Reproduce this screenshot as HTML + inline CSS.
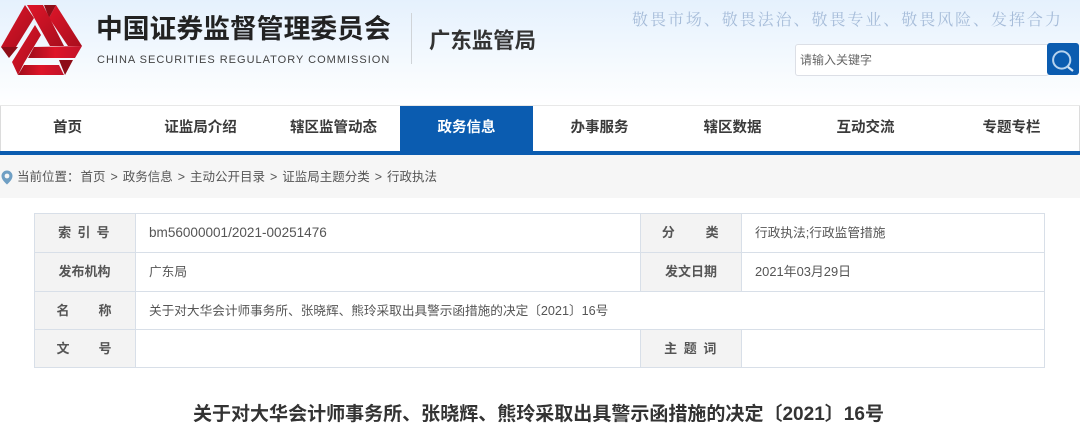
<!DOCTYPE html>
<html lang="zh"><head><meta charset="utf-8"><style>
*{margin:0;padding:0;box-sizing:border-box}
html,body{width:1080px;height:444px;overflow:hidden;background:#fff}
body{position:relative;font-family:"Liberation Sans","Noto Sans CJK SC",sans-serif;color:#444}
.a{position:absolute;white-space:nowrap}
#hd{left:0;top:0;width:1080px;height:106px;background:linear-gradient(#e5f1fd,#fff)}
.nv{top:106px;height:45px;line-height:45px;text-align:center;font-size:14.5px;font-weight:700;color:#3a3a3a}
.ln{background:#d8dfe8}
.th{background:#f3f3f3;text-align:center;font-size:13px;font-weight:700;color:#555;height:38px;line-height:38px}
.td{font-size:13px;color:#555;height:38px;line-height:38px}
</style></head><body>
<div class="a" id="hd"></div>
<svg class="a" style="left:0;top:0;filter:blur(.35px)" width="90" height="80" viewBox="0 0 90 80">
<defs>
<linearGradient id="g" x1="0" y1="0" x2="1" y2="1"><stop offset="0" stop-color="#de1529"/><stop offset="1" stop-color="#a80e1d"/></linearGradient>
<linearGradient id="h" x1="0" y1="0" x2="1" y2="0"><stop offset="0" stop-color="#a00d1b"/><stop offset=".5" stop-color="#de1529"/><stop offset="1" stop-color="#c2132a"/></linearGradient>
</defs>
<polygon points="56,5 82,46 68,46 49,18" fill="url(#g)"/>
<polygon points="44,5 56,5 49,18" fill="#8e0d18"/>
<polygon points="1,47 18,47 9,58" fill="#8e0d18"/>
<polygon points="59,60 73,60 65,75" fill="#8e0d18"/>
<polygon points="25,5 34,18 16,47 1,47" fill="url(#g)"/>
<polygon points="27,5 43,5 64,46 50,46" fill="url(#g)"/>
<polygon points="34,47 82,46 75,58 28,58" fill="url(#h)"/>
<polygon points="35,25 41,35 24,63 18,75 12,62" fill="url(#g)"/>
<polygon points="18,75 24,65 59,65 64,75" fill="url(#h)"/>
</svg>
<div class="a" style="left:96px;top:11px;font-size:26.8px;line-height:36px;font-weight:700;color:#222">中国证券监督管理委员会</div>
<div class="a" style="left:97px;top:52px;font-size:11px;line-height:16px;letter-spacing:1px;color:#444">CHINA SECURITIES REGULATORY COMMISSION</div>
<div class="a" style="left:411px;top:13px;width:1px;height:51px;background:#d0d4d8"></div>
<div class="a" style="left:429px;top:26px;font-size:21.4px;line-height:30px;font-weight:700;color:#333">广东监管局</div>
<div class="a" style="left:632px;top:8px;font-family:'Noto Serif CJK SC',serif;font-size:16px;line-height:21px;letter-spacing:1.95px;color:#a6bcd9">敬畏市场、敬畏法治、敬畏专业、敬畏风险、发挥合力</div>
<div class="a" style="left:795px;top:44px;width:254px;height:32px;background:#fff;border:1px solid #dcdfe6;border-radius:3px"></div>
<div class="a" style="left:800px;top:52px;font-size:12px;line-height:16px;color:#666">请输入关键字</div>
<div class="a" style="left:1047px;top:43px;width:32px;height:32px;background:#0b5cb0;border-radius:3px"></div>
<svg class="a" style="left:1047px;top:44px" width="32" height="31" viewBox="0 0 32 31"><circle cx="14.7" cy="16" r="8.6" fill="none" stroke="#b7d3ee" stroke-width="2"/><path d="M21 23l5 4" stroke="#d5e5f5" stroke-width="2.2"/></svg>

<div class="a" style="left:0;top:105px;width:1080px;height:1px;background:#e8e8e8"></div>
<div class="a" style="left:0;top:106px;width:1080px;height:45px;background:#fff;border-left:1px solid #dcdcdc;border-right:1px solid #dcdcdc"></div>
<div class="a" style="left:0;top:151px;width:1080px;height:4px;background:#0b5cb0"></div>
<div class="a" style="left:400px;top:106px;width:133px;height:45px;background:#0b5cb0"></div>
<div class="a nv" style="left:1px;width:133px">首页</div>
<div class="a nv" style="left:134px;width:133px">证监局介绍</div>
<div class="a nv" style="left:267px;width:133px">辖区监管动态</div>
<div class="a nv" style="left:400px;width:133px;color:#fff">政务信息</div>
<div class="a nv" style="left:533px;width:133px">办事服务</div>
<div class="a nv" style="left:666px;width:133px">辖区数据</div>
<div class="a nv" style="left:799px;width:133px">互动交流</div>
<div class="a nv" style="left:945px;width:133px">专题专栏</div>

<div class="a" style="left:0;top:155px;width:1080px;height:43px;background:#f6f6f6"></div>
<svg class="a" style="left:1px;top:170px" width="12" height="15" viewBox="0 0 12 15"><path d="M6 0.5a5.5 5.5 0 0 1 5.5 5.5c0 3.5-3.5 6.5-5.5 8.5C4 12.5.5 9.5.5 6A5.5 5.5 0 0 1 6 .5z" fill="#6f9fc4"/><circle cx="6" cy="6" r="2.4" fill="#f6f6f6"/></svg>
<div class="a" style="left:17px;top:169px;font-size:12.5px;line-height:17px;color:#555;word-spacing:1.5px">当前位置：<span style="margin-left:1px">首页</span> &gt; 政务信息 &gt; 主动公开目录 &gt; 证监局主题分类 &gt; 行政执法</div>

<div class="a th" style="left:34px;top:214px;width:101px;letter-spacing:1.3px">索 引 号</div>
<div class="a th" style="left:34px;top:253px;width:101px">发布机构</div>
<div class="a th" style="left:34px;top:292px;width:101px;letter-spacing:1px">名&emsp;&emsp;称</div>
<div class="a th" style="left:34px;top:330px;width:101px;letter-spacing:1px">文&emsp;&emsp;号</div>
<div class="a th" style="left:641px;top:214px;width:100px;letter-spacing:1.6px">分&emsp;&emsp;类</div>
<div class="a th" style="left:641px;top:253px;width:100px">发文日期</div>
<div class="a th" style="left:641px;top:330px;width:100px;letter-spacing:1.5px">主 题 词</div>

<div class="a td" style="left:149px;top:214px;font-size:13.55px">bm56000001/2021-00251476</div>
<div class="a td" style="left:149px;top:253px;font-size:12.7px">广东局</div>
<div class="a td" style="left:149px;top:292px;font-size:12.65px">关于对大华会计师事务所、张晓辉、熊玲采取出具警示函措施的决定〔2021〕16号</div>
<div class="a td" style="left:755px;top:214px;font-size:12.7px">行政执法;行政监管措施</div>
<div class="a td" style="left:755px;top:253px;font-size:12.9px">2021年03月29日</div>

<div class="a ln" style="left:34px;top:213px;width:1011px;height:1px"></div>
<div class="a ln" style="left:34px;top:252px;width:1011px;height:1px"></div>
<div class="a ln" style="left:34px;top:291px;width:1011px;height:1px"></div>
<div class="a ln" style="left:34px;top:329px;width:1011px;height:1px"></div>
<div class="a ln" style="left:34px;top:367px;width:1011px;height:1px"></div>
<div class="a ln" style="left:34px;top:213px;width:1px;height:155px"></div>
<div class="a ln" style="left:135px;top:213px;width:1px;height:155px"></div>
<div class="a ln" style="left:640px;top:213px;width:1px;height:79px"></div>
<div class="a ln" style="left:640px;top:329px;width:1px;height:39px"></div>
<div class="a ln" style="left:741px;top:213px;width:1px;height:79px"></div>
<div class="a ln" style="left:741px;top:329px;width:1px;height:39px"></div>
<div class="a ln" style="left:1044px;top:213px;width:1px;height:155px"></div>

<div class="a" style="left:193px;top:401px;font-size:19.03px;line-height:27px;font-weight:700;color:#333">关于对大华会计师事务所、张晓辉、熊玲采取出具警示函措施的决定〔2021〕16号</div>
</body></html>
